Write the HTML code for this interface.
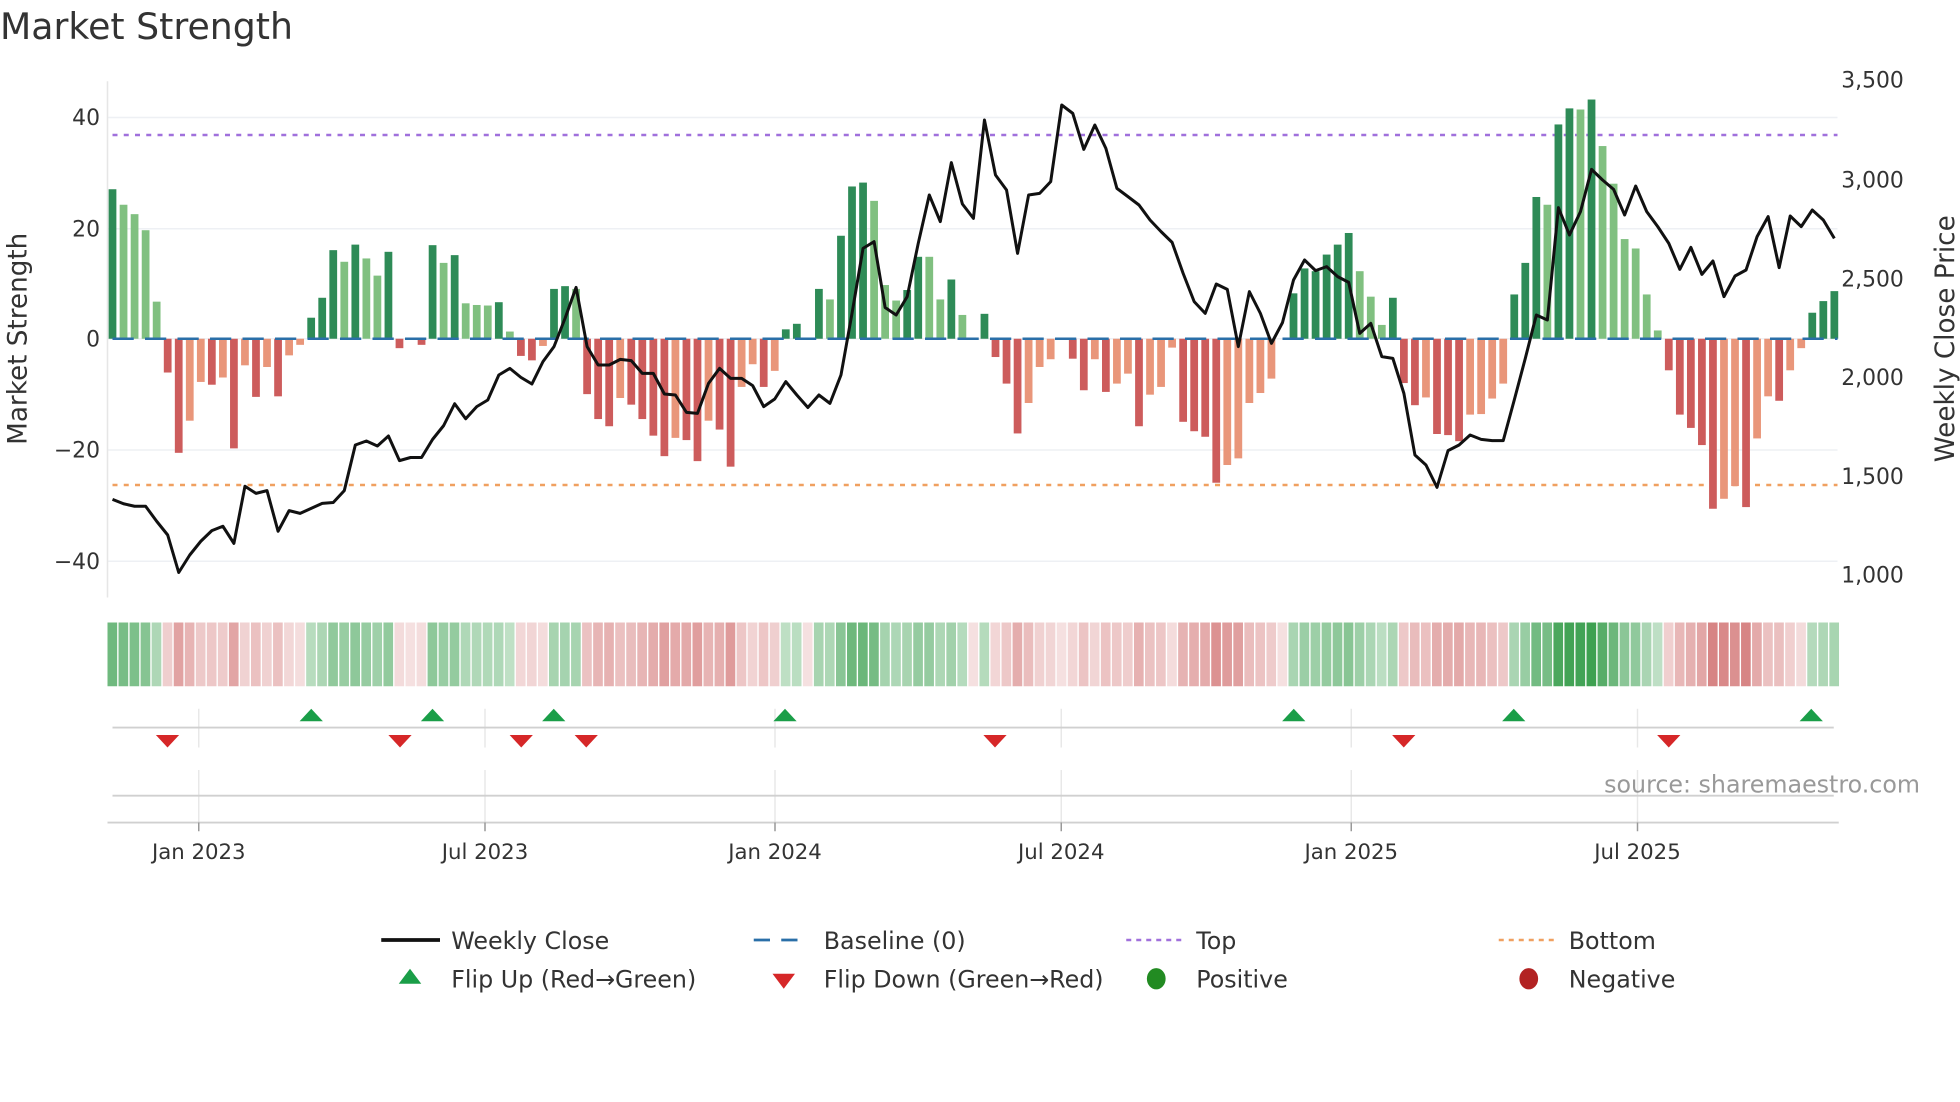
<!DOCTYPE html>
<html><head><meta charset="utf-8"><style>
html,body{margin:0;padding:0;background:#fff;width:1960px;height:1102px;overflow:hidden}
svg{display:block}
text{font-family:"DejaVu Sans","Liberation Sans",sans-serif;fill:#333}
</style></head><body>
<svg id="c" xmlns="http://www.w3.org/2000/svg" width="1960" height="1102" viewBox="0 0 1568 881.6">
<rect width="1568" height="882" fill="#fff"/>
<text x="0" y="31" font-size="29">Market Strength</text>
<g stroke="#eef0f4" stroke-width="1.2">
<line x1="86" x2="1470" y1="94" y2="94"/><line x1="86" x2="1470" y1="183" y2="183"/>
<line x1="86" x2="1470" y1="360" y2="360"/><line x1="86" x2="1470" y1="449" y2="449"/>
<line x1="86" x2="1470" y1="271" y2="271"/>
</g>
<line x1="86" x2="86" y1="65" y2="478" stroke="#e6e6e6" stroke-width="1.2"/>
<g font-size="17.5" text-anchor="end">
<text x="80" y="100">40</text><text x="80" y="189">20</text><text x="80" y="277">0</text>
<text x="80" y="366">−20</text><text x="80" y="455">−40</text>
</g>
<g font-size="17.5">
<text x="1473" y="70">3,500</text><text x="1473" y="150">3,000</text><text x="1473" y="229">2,500</text>
<text x="1473" y="308">2,000</text><text x="1473" y="387">1,500</text><text x="1473" y="466">1,000</text>
</g>
<text transform="translate(21,271) rotate(-90)" font-size="21" text-anchor="middle">Market Strength</text>
<text transform="translate(1563,271) rotate(-90)" font-size="21" text-anchor="middle">Weekly Close Price</text>
<line x1="90" x2="1470" y1="108" y2="108" stroke="#a070dc" stroke-width="2" stroke-dasharray="4,5"/>
<line x1="90" x2="1470" y1="388" y2="388" stroke="#f0a060" stroke-width="2" stroke-dasharray="4,5"/>
<g id="bars"></g>
<line x1="90" x2="1470" y1="271" y2="271" stroke="#2a6fa8" stroke-width="2" stroke-dasharray="17,9"/>
<polyline id="price" fill="none" stroke="#111" stroke-width="2.4" stroke-linejoin="round"/>
<g id="strip"></g>
<g stroke="#e8e8e8" stroke-width="1.2">
<line x1="159" x2="159" y1="567" y2="598"/><line x1="388" x2="388" y1="567" y2="598"/><line x1="620" x2="620" y1="567" y2="598"/>
<line x1="849" x2="849" y1="567" y2="598"/><line x1="1081" x2="1081" y1="567" y2="598"/><line x1="1310" x2="1310" y1="567" y2="598"/>
<line x1="159" x2="159" y1="616" y2="658"/><line x1="388" x2="388" y1="616" y2="658"/><line x1="620" x2="620" y1="616" y2="658"/>
<line x1="849" x2="849" y1="616" y2="658"/><line x1="1081" x2="1081" y1="616" y2="658"/><line x1="1310" x2="1310" y1="616" y2="658"/>
</g>
<line x1="90" x2="1467" y1="582" y2="582" stroke="#d0d0d0" stroke-width="1.5"/>
<line x1="90" x2="1467" y1="636.5" y2="636.5" stroke="#d0d0d0" stroke-width="1.5"/>
<line x1="86" x2="1471" y1="658" y2="658" stroke="#d0d0d0" stroke-width="1.5"/>
<g id="marks"></g>
<g stroke="#999" stroke-width="1.2">
<line x1="159" x2="159" y1="658" y2="665"/><line x1="388" x2="388" y1="658" y2="665"/><line x1="620" x2="620" y1="658" y2="665"/>
<line x1="849" x2="849" y1="658" y2="665"/><line x1="1081" x2="1081" y1="658" y2="665"/><line x1="1310" x2="1310" y1="658" y2="665"/>
</g>
<g font-size="17" text-anchor="middle">
<text x="159" y="687">Jan 2023</text><text x="388" y="687">Jul 2023</text><text x="620" y="687">Jan 2024</text>
<text x="849" y="687">Jul 2024</text><text x="1081" y="687">Jan 2025</text><text x="1310" y="687">Jul 2025</text>
</g>
<text x="1536" y="634" font-size="19" text-anchor="end" style="fill:#999">source: sharemaestro.com</text>
<g font-size="19">
<line x1="305" x2="352" y1="752" y2="752" stroke="#111" stroke-width="3"/>
<text x="361" y="759">Weekly Close</text>
<line x1="603" x2="647" y1="752" y2="752" stroke="#2a6fa8" stroke-width="2.2" stroke-dasharray="13,9"/>
<text x="659" y="759">Baseline (0)</text>
<line x1="901" x2="945" y1="752" y2="752" stroke="#a070dc" stroke-width="2" stroke-dasharray="4,4"/>
<text x="957" y="759">Top</text>
<line x1="1199" x2="1243" y1="752" y2="752" stroke="#f0a060" stroke-width="2" stroke-dasharray="4,4"/>
<text x="1255" y="759">Bottom</text>
<polygon points="319,787 328,775 337,787" fill="#1a9e48"/>
<text x="361" y="790">Flip Up (Red→Green)</text>
<polygon points="618,779 636,779 627,791" fill="#d62728"/>
<text x="659" y="790">Flip Down (Green→Red)</text>
<ellipse cx="925" cy="783" rx="7.5" ry="8.5" fill="#228b22"/>
<text x="957" y="790">Positive</text>
<ellipse cx="1223" cy="783" rx="7.5" ry="8.5" fill="#b22222"/>
<text x="1255" y="790">Negative</text>
</g>
</svg>
<script>
var V=[27,24.2,22.5,19.6,6.7,-6.1,-20.6,-14.8,-7.8,-8.3,-7,-19.8,-4.8,-10.5,-5.1,-10.4,-3,-1.1,3.8,7.4,16,13.9,17,14.5,11.4,15.7,-1.7,0,-1.1,16.9,13.7,15.1,6.4,6.1,6,6.6,1.3,-3.1,-3.9,-1.3,
9,9.5,9,-10,-14.5,-15.8,-10.7,-11.9,-14.5,-17.5,-21.2,-17.9,-18.3,-22.1,-14.8,-16.4,-23.1,-8.7,-4.6,-8.7,-5.8,1.7,2.7,0,9,7.1,18.6,27.5,28.2,24.9,9.7,6.9,8.8,14.8,14.8,7.1,10.7,4.3,0,4.5,
-3.3,-8.1,-17.1,-11.6,-5.1,-3.7,0,-3.6,-9.3,-3.7,-9.6,-8.1,-6.3,-15.8,-10.1,-8.7,-1.6,-15,-16.7,-17.7,-26,-22.8,-21.6,-11.6,-9.8,-7.2,0,8.2,12.7,12.2,15.2,17,19.1,12.2,7.6,2.5,7.4,-8,-12,-10.6,
-17.2,-17.4,-18.5,-13.7,-13.6,-10.8,-8.1,8,13.7,25.6,24.2,38.7,41.6,41.4,43.2,34.8,28,18,16.3,8,1.5,-5.7,-13.7,-16.1,-19.2,-30.7,-28.9,-26.6,-30.4,-18,-10.4,-11.2,-5.7,-1.7,4.7,6.8,8.6];
var D="dllllddlld"+"ldldldlldd"+"dldllddddd"+"ldllldlddl"+"ddldddlddd"+"dlddlddlld"+"lddddldddl"+"llddlldldd"+"dddllldddl"+"dlldlllddd"+"dllllldddd"+"dddllldddl"+"dddllllddd"+"lddldlllll"+"ldddddlldl"+"ldllddd";
var P=[399.5,403,405,405,417,428,458,444,433,424.5,421,434.7,389,394.7,392.5,425,408.5,410.7,406.7,402.7,402,392.5,356,352.8,356.8,348.8,368.5,366,366,351.5,340.5,323,335,325.3,320,300,294.7,301.9,307.2,289.3,
277.3,254.7,229.9,277.3,292,292,287.5,288.5,298.7,298.7,315.2,316,329.9,330.7,306.7,294.7,302.7,302.7,308.5,325.3,319.2,305.3,316,326,316,322.7,300,250.7,198.7,193.3,246,252,237.3,194.7,156,177.3,130.1,163.2,174.7,96,
140,152,202.7,156,154.7,145.3,84,90.7,119.5,100,118.7,150.7,157.3,164,176,185.3,193.9,218.7,241.3,250.7,227.2,231.5,277.3,233.3,250.7,274.7,258.1,224,208,216.5,213.3,221.3,225.9,266.7,258.7,285.3,286.7,314.7,364,372,
389.9,360.5,356,348,351.5,352.5,352.5,320,286.7,252,256,166.1,188,169.3,135.5,144,151.5,172,148.8,169.3,181.3,194.7,215.5,197.9,219.5,208.8,237.3,220.8,216,189.3,173.3,214.1,172.8,181.3,168,176,190.7];
var pitch=8.83,b="",s="",pts=[];
function mix(c,t){return "rgb("+[0,1,2].map(function(k){return Math.round(255+(c[k]-255)*t)}).join(",")+")";}
for(var i=0;i<V.length;i++){
 var v=V[i],x=90+pitch*i,d=D[i]=="d";
 if(v!==0){var y0=271,y1=271-v*4.43;var col=v>0?(d?"#2e8b57":"#80c080"):(d?"#cd5c5c":"#e9967a");
  b+='<rect x="'+(x-3.1).toFixed(2)+'" y="'+Math.min(y0,y1).toFixed(2)+'" width="6.2" height="'+Math.abs(y1-y0).toFixed(2)+'" fill="'+col+'"/>';}
 var c,t;
 if(v>0){c=[40,150,62];t=0.28+0.62*Math.min(1,v/43);}else{c=[200,85,85];t=0.18+0.55*Math.min(1,-v/31);}
 s+='<rect x="'+(86+pitch*i).toFixed(2)+'" y="498" width="'+(pitch-1.1).toFixed(2)+'" height="51" fill="'+mix(c,t)+'"/>';
 pts.push(x.toFixed(2)+","+P[i]);
}
document.getElementById("bars").innerHTML=b;
document.getElementById("strip").innerHTML=s;
document.getElementById("price").setAttribute("points",pts.join(" "));
var m="",up=[249,346,443,628,1035,1211,1449],dn=[134,320,417,469,796,1123,1335];
up.forEach(function(x){m+='<polygon points="'+(x-9.3)+',577 '+x+',567 '+(x+9.3)+',577" fill="#1a9e48"/>';});
dn.forEach(function(x){m+='<polygon points="'+(x-9.3)+',588 '+(x+9.3)+',588 '+x+',598" fill="#d62728"/>';});
document.getElementById("marks").innerHTML=m;
</script>
</body></html>
